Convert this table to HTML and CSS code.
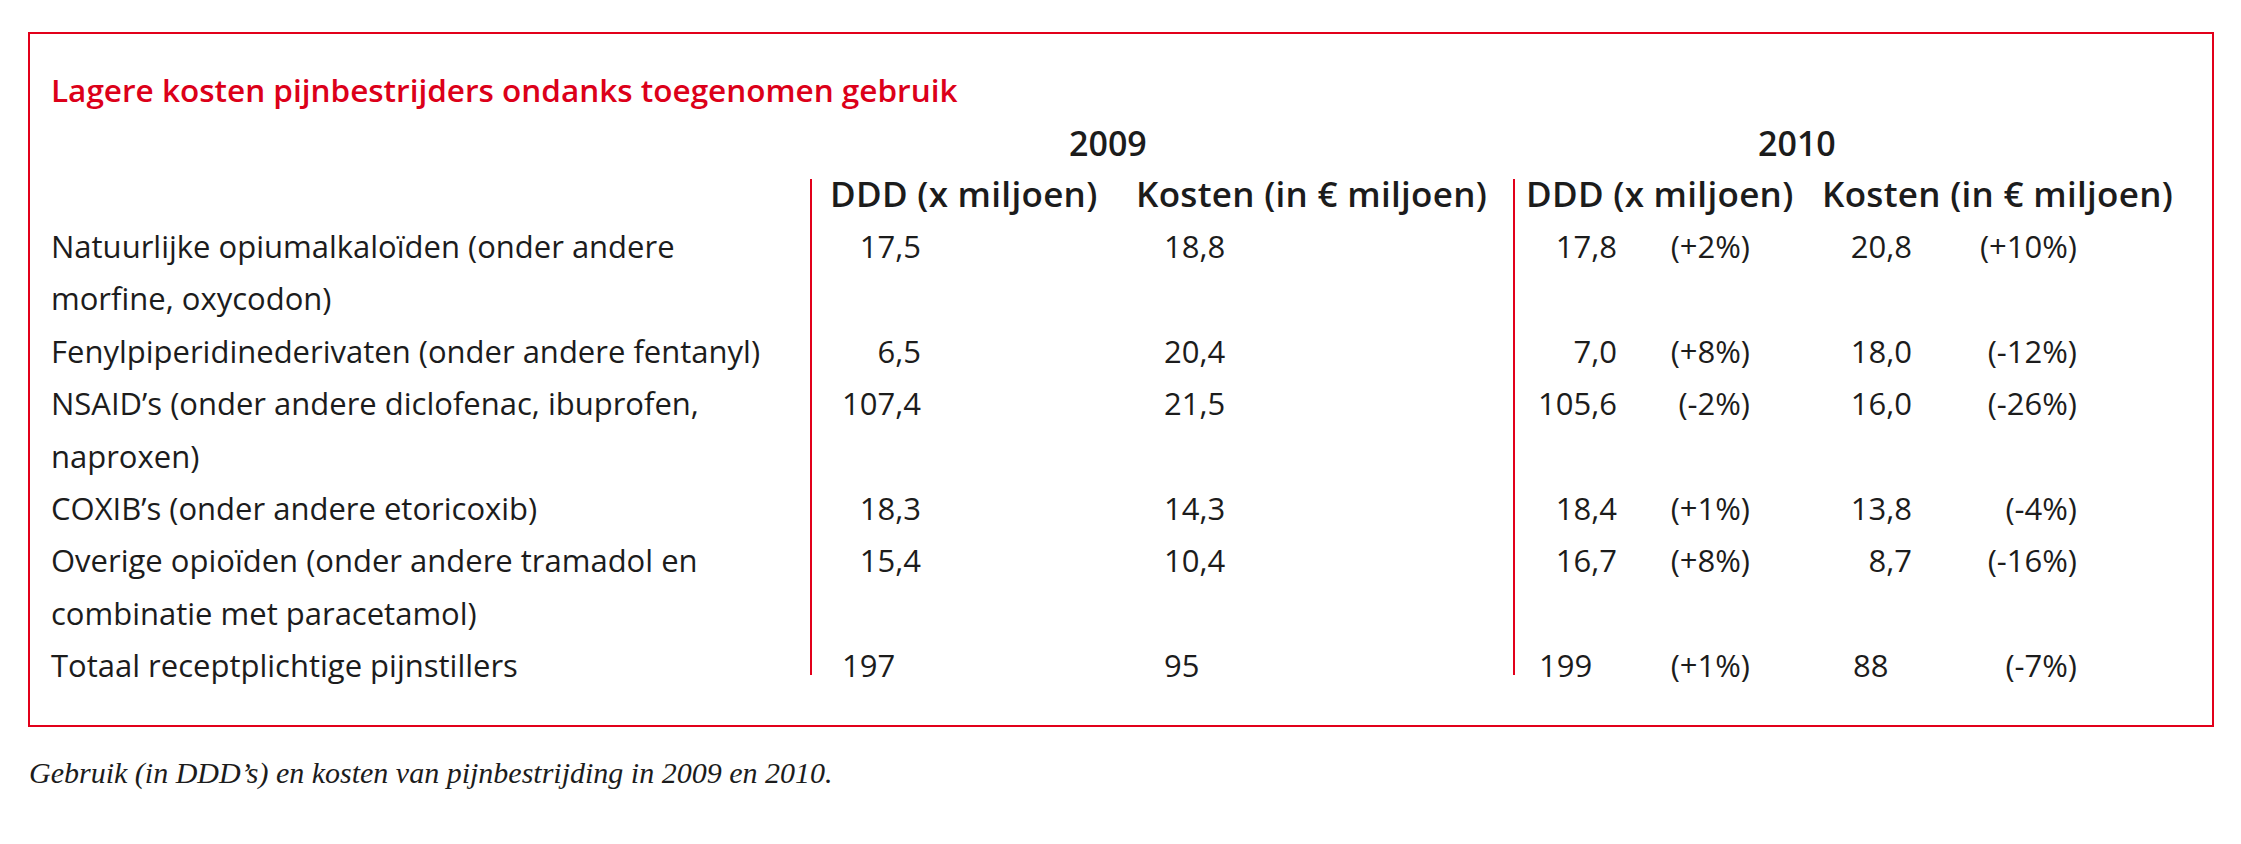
FILE: index.html
```html
<!DOCTYPE html>
<html lang="nl">
<head>
<meta charset="utf-8">
<title>Lagere kosten pijnbestrijders ondanks toegenomen gebruik</title>
<link rel="stylesheet" href="styles.css">
</head>
<body>
<div class="page">
  <div class="box">
    <h1 class="title">Lagere kosten pijnbestrijders ondanks toegenomen gebruik</h1>
    <div class="row year-row">
      <div class="label"></div>
      <div class="year y09">2009</div>
      <div class="year y10">2010</div>
    </div>
    <div class="row head-row">
      <div class="label"></div>
      <div class="head h09"><span class="h-ddd">DDD (x miljoen)</span><span>Kosten (in € miljoen)</span></div>
      <div class="head h10"><span class="h-ddd">DDD (x miljoen)</span><span>Kosten (in € miljoen)</span></div>
    </div>
    <div class="row">
      <div class="label">Natuurlijke opiumalkaloïden (onder andere<br>morfine, oxycodon)</div>
      <div class="c a09 div">17,5</div><div class="c b09">18,8</div>
      <div class="c a10 div">17,8</div><div class="c p1">(+2%)</div><div class="c k10">20,8</div><div class="c p2">(+10%)</div><div></div>
    </div>
    <div class="row">
      <div class="label">Fenylpiperidinederivaten (onder andere fentanyl)</div>
      <div class="c a09 div">6,5</div><div class="c b09">20,4</div>
      <div class="c a10 div">7,0</div><div class="c p1">(+8%)</div><div class="c k10">18,0</div><div class="c p2">(-12%)</div><div></div>
    </div>
    <div class="row">
      <div class="label">NSAID’s (onder andere diclofenac, ibuprofen,<br>naproxen)</div>
      <div class="c a09 div">107,4</div><div class="c b09">21,5</div>
      <div class="c a10 div">105,6</div><div class="c p1">(-2%)</div><div class="c k10">16,0</div><div class="c p2">(-26%)</div><div></div>
    </div>
    <div class="row">
      <div class="label">COXIB’s (onder andere etoricoxib)</div>
      <div class="c a09 div">18,3</div><div class="c b09">14,3</div>
      <div class="c a10 div">18,4</div><div class="c p1">(+1%)</div><div class="c k10">13,8</div><div class="c p2">(-4%)</div><div></div>
    </div>
    <div class="row">
      <div class="label">Overige opioïden (onder andere tramadol en<br>combinatie met paracetamol)</div>
      <div class="c a09 div">15,4</div><div class="c b09">10,4</div>
      <div class="c a10 div">16,7</div><div class="c p1">(+8%)</div><div class="c k10">8,7</div><div class="c p2">(-16%)</div><div></div>
    </div>
    <div class="row total">
      <div class="label">Totaal receptplichtige pijnstillers</div>
      <div class="c a09 div">197</div><div class="c b09">95</div>
      <div class="c a10 div">199</div><div class="c p1">(+1%)</div><div class="c k10">88</div><div class="c p2">(-7%)</div><div></div>
    </div>
  </div>
  <p class="caption">Gebruik (in DDD’s) en kosten van pijnbestrijding in 2009 en 2010.</p>
</div>
</body>
</html>
```

FILE: styles.css
```css
html, body {
  margin: 0;
  padding: 0;
  background: #ffffff;
}

.page {
  padding: 32px 0 0 28px;
  font-family: "Open Sans", "Noto Sans", "DejaVu Sans", sans-serif;
  color: #1c1c1c;
}

.box {
  width: 2186px;
  box-sizing: border-box;
  border: 2px solid #e2001a;
  padding: 36px 0 50px 21px;
}

.title {
  margin: 0;
  font-size: 31.5px;
  font-weight: 600;
  line-height: 40px;
  color: #dc0019;
  letter-spacing: 0;
}

.row {
  display: grid;
  grid-template-columns: 759px 111px 592px 104px 133px 162px 165px 1fr;
  font-size: 31px;
  line-height: 52.4px;
}

.label {
  white-space: nowrap;
}

.div {
  border-left: 2px solid #e2001a;
}

.c {
  white-space: nowrap;
}

.a09, .a10, .p1, .k10, .p2 {
  text-align: right;
}

.b09 {
  padding-left: 243px;
}

.total {
  height: 36px;
}

.total > * {
  height: 36px;
}

.total .a09 {
  text-align: left;
  padding-left: 30px;
}

.total .a10 {
  text-align: left;
  padding-left: 24px;
}

.total .k10 {
  text-align: left;
  padding-left: 103px;
}

.year-row {
  height: 69px;
  line-height: 66px;
  font-size: 34px;
  font-weight: 600;
}

.year {
  white-space: nowrap;
}

.y09 {
  grid-column: 2 / 4;
  padding-left: 259px;
}

.y10 {
  grid-column: 4 / 9;
  padding-left: 245px;
}

.head-row {
  height: 41px;
  line-height: 30px;
  font-size: 35px;
  font-weight: 600;
  letter-spacing: 0.3px;
}

.head {
  display: flex;
  white-space: nowrap;
  border-left: 2px solid #e2001a;
}

.h09 {
  grid-column: 2 / 4;
  padding-left: 18px;
}

.h09 .h-ddd {
  width: 306px;
}

.h10 {
  grid-column: 4 / 9;
  padding-left: 11px;
}

.h10 .h-ddd {
  width: 296px;
}

.caption {
  margin: 28px 0 0 1px;
  font-family: "Liberation Serif", "DejaVu Serif", serif;
  font-style: italic;
  font-size: 30px;
  line-height: 36px;
  color: #1c1c1c;
}
```
